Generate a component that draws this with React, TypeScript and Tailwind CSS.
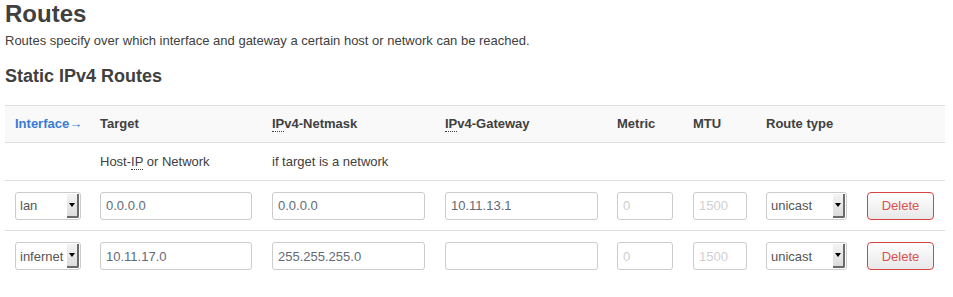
import React from "react";

function Abbr({ children }: { children: React.ReactNode }) {
  return (
    <span className="border-b border-dotted border-[#404040] pb-0">{children}</span>
  );
}

function Select({ value, w }: { value: string; w: string }) {
  return (
    <div className={`${w} h-[28px] border border-[#ccc] rounded-[3px] bg-white flex items-stretch overflow-hidden`}>
      <div className="flex-1 flex items-center pl-[4px] text-[13px] text-[#555]">{value}</div>
      <div className="w-[12px] my-[1px] mr-[1px] bg-gradient-to-b from-[#f4f4f4] to-[#dcdcdc] border-r-[2px] border-b-[2px] border-[#6a6a6a] rounded-br-[2px] flex items-center justify-center">
        <div className="w-0 h-0 border-l-[3px] border-r-[3px] border-t-[4px] border-l-transparent border-r-transparent border-t-black"></div>
      </div>
    </div>
  );
}

function Input({ value, w, placeholder }: { value?: string; w: string; placeholder?: string }) {
  return (
    <div className={`${w} h-[28px] border border-[#ccc] rounded-[3px] bg-white flex items-center px-[5px] text-[13px]`}>
      {value ? (
        <span className="text-[#5f6b78]">{value}</span>
      ) : placeholder ? (
        <span className="text-[#cfcfcf]">{placeholder}</span>
      ) : null}
    </div>
  );
}

function DeleteBtn() {
  return (
    <div className="w-[67px] h-[28px] border border-[#d64541] rounded-[4px] bg-gradient-to-b from-white to-[#e8e8e8] flex items-center justify-center text-[13px] text-[#d9534f]">
      Delete
    </div>
  );
}

const widths = ["w-[85px]", "w-[172px]", "w-[173px]", "w-[172px]", "w-[76px]", "w-[73px]", "w-[101px]", "w-[88px]"];

export default function App() {
  const rows = [
    { iface: "lan", target: "0.0.0.0", mask: "0.0.0.0", gw: "10.11.13.1" },
    { iface: "infernet", target: "10.11.17.0", mask: "255.255.255.0", gw: "" },
  ];
  return (
    <div className="font-['Liberation_Sans',Arial,sans-serif] text-[#404040] bg-white w-[953px] h-[297px] px-[5px]">
      <h2 className="text-[24px] font-bold leading-[28px] pt-0 text-[#404040]">Routes</h2>
      <p className="text-[13px] leading-[16px] mt-[5px]">
        Routes specify over which interface and gateway a certain host or network can be reached.
      </p>
      <h3 className="text-[18px] font-bold leading-[20px] mt-[17px]">Static IPv4 Routes</h3>
      <table className="mt-[19px] w-[940px] table-fixed border-collapse">
        <colgroup>
          {widths.map((w, i) => (
            <col key={i} className={w} />
          ))}
        </colgroup>
        <thead>
          <tr className="bg-[#f9f9f9] border-t border-b border-[#ddd] h-[37px] text-[13px] font-bold text-left">
            <th className="pl-[10px] text-[#3a7bd5] font-bold">Interface→</th>
            <th className="pl-[10px]">Target</th>
            <th className="pl-[10px]"><Abbr>IP</Abbr>v4-Netmask</th>
            <th className="pl-[10px]"><Abbr>IP</Abbr>v4-Gateway</th>
            <th className="pl-[10px]">Metric</th>
            <th className="pl-[10px]">MTU</th>
            <th className="pl-[10px]">Route type</th>
            <th></th>
          </tr>
        </thead>
        <tbody>
          <tr className="border-b border-[#ddd] h-[38px] text-[13px]">
            <td></td>
            <td className="pl-[10px]">Host-<Abbr>IP</Abbr> or Network</td>
            <td className="pl-[10px]">if target is a network</td>
            <td></td>
            <td></td>
            <td></td>
            <td></td>
            <td></td>
          </tr>
          {rows.map((r, i) => (
            <tr key={i} className={`${i === 0 ? "border-b border-[#ddd]" : ""} h-[50px]`}>
              <td className="pl-[10px] pt-[1px]"><Select value={r.iface} w="w-[66px]" /></td>
              <td className="pl-[10px] pt-[1px]"><Input value={r.target} w="w-[152px]" /></td>
              <td className="pl-[10px] pt-[1px]"><Input value={r.mask} w="w-[153px]" /></td>
              <td className="pl-[10px] pt-[1px]"><Input value={r.gw} w="w-[153px]" /></td>
              <td className="pl-[10px] pt-[1px]"><Input placeholder="0" w="w-[56px]" /></td>
              <td className="pl-[10px] pt-[1px]"><Input placeholder="1500" w="w-[54px]" /></td>
              <td className="pl-[10px] pt-[1px]"><Select value="unicast" w="w-[81px]" /></td>
              <td className="pl-[10px] pt-[1px]"><DeleteBtn /></td>
            </tr>
          ))}
        </tbody>
      </table>
    </div>
  );
}
